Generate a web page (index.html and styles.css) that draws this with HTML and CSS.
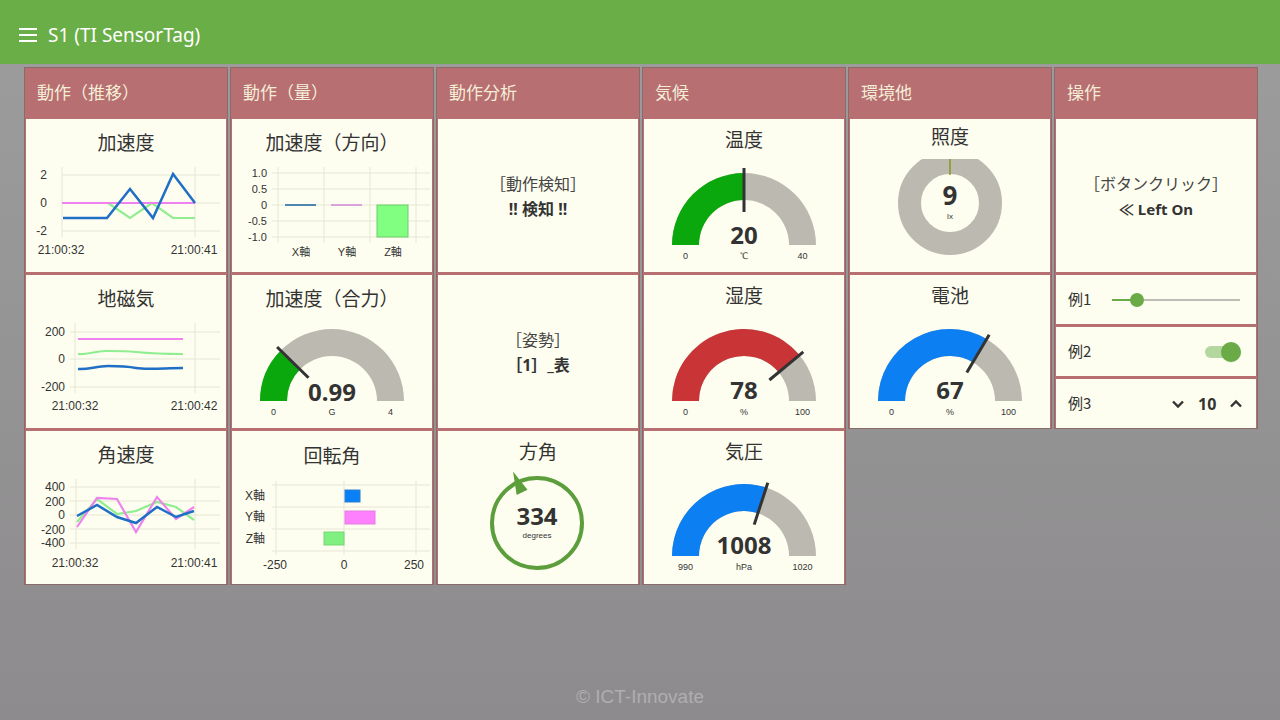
FILE: index.html
```html
<!DOCTYPE html>
<html lang="ja">
<head>
<meta charset="utf-8">
<title>S1 (TI SensorTag)</title>
<link rel="stylesheet" href="styles.css">
</head>
<body>
<header class="topbar">
  <svg class="menu" width="18" height="14" viewBox="0 0 18 14"><path d="M0 1H18M0 7H18M0 13H18" stroke="#fff" stroke-width="2"/></svg>
  <span class="app-title">S1 (TI SensorTag)</span>
</header>

<main class="board">
  <!-- Column 1 -->
  <section class="group">
    <h2 class="group-head">動作（推移）</h2>
    <div class="cards">
      <div class="card">
        <div class="title">加速度</div>
        <svg class="plot" viewBox="0 40 200 113" width="200" height="113">
          <path class="grid" d="M36 56H194M36 84H194M36 112H194M36 48V118M169 48V118"/>
          <g class="ax end"><text x="21" y="60">2</text><text x="21" y="88">0</text><text x="21" y="116">-2</text></g>
          <g class="ax mid"><text x="35" y="135">21:00:32</text><text x="168" y="135">21:00:41</text></g>
          <polyline class="ln lg" points="82,84 104,99 126,84 147,99 169,99"/>
          <polyline class="ln lm" points="36,84 169,84"/>
          <polyline class="ln lb" points="37,99 81,99 104,70 127,99 147,55 169,84"/>
        </svg>
      </div>
      <div class="card">
        <div class="title">地磁気</div>
        <svg class="plot" viewBox="0 40 200 113" width="200" height="113">
          <path class="grid" d="M44 57H194M44 84H194M44 112H194M49 48V118M169 48V118"/>
          <g class="ax end"><text x="39" y="61">200</text><text x="39" y="88">0</text><text x="39" y="116">-200</text></g>
          <g class="ax mid"><text x="49" y="135">21:00:32</text><text x="168" y="135">21:00:42</text></g>
          <polyline class="ln lm" points="52,64 157,64"/>
          <path class="ln lg" d="M52 79C62 80 68 76 80 76S100 76 110 77S130 79 157 79"/>
          <path class="ln lb" d="M52 94C62 95 70 91 82 91S100 91 110 93S140 93 157 93"/>
        </svg>
      </div>
      <div class="card">
        <div class="title">角速度</div>
        <svg class="plot" viewBox="0 40 200 113" width="200" height="113">
          <path class="grid" d="M44 56H194M44 70H194M44 84H194M44 98H194M44 112H194M50 48V118M169 48V118"/>
          <g class="ax end"><text x="39" y="60">400</text><text x="39" y="75">200</text><text x="39" y="88">0</text><text x="39" y="103">-200</text><text x="39" y="116">-400</text></g>
          <g class="ax mid"><text x="49" y="136">21:00:32</text><text x="168" y="136">21:00:41</text></g>
          <polyline class="ln lg" points="51,91 71,68 91,83 110,80 131,71 150,76 168,89"/>
          <polyline class="ln lm" points="51,96 71,67 91,68 110,101 131,66 150,88 168,76"/>
          <polyline class="ln lb" points="51,85 71,74 91,86 110,92 131,76 150,86 168,80"/>
        </svg>
      </div>
    </div>
  </section>

  <!-- Column 2 -->
  <section class="group">
    <h2 class="group-head">動作（量）</h2>
    <div class="cards">
      <div class="card">
        <div class="title">加速度（方向）</div>
        <svg class="plot" viewBox="0 40 200 113" width="200" height="113">
          <path class="grid" d="M40 54H198M40 70H198M40 86H198M40 102H198M40 118H198M46 48V124M92 48V124M138 48V124M184 48V124"/>
          <g class="ax end sm"><text x="35" y="58">1.0</text><text x="35" y="74">0.5</text><text x="35" y="90">0</text><text x="35" y="106">-0.5</text><text x="35" y="122">-1.0</text></g>
          <path d="M53 86H84" stroke="#4f86b0" stroke-width="2"/>
          <path d="M99 86H130" stroke="#dba3db" stroke-width="2"/>
          <rect x="145" y="86" width="31" height="32" fill="#80ff80" stroke="#6ccc6c"/>
          <g class="ax mid sm"><text x="69" y="137">X軸</text><text x="115" y="137">Y軸</text><text x="161" y="137">Z軸</text></g>
        </svg>
      </div>
      <div class="card">
        <div class="title">加速度（合力）</div>
        <svg class="plot" viewBox="0 40 200 113" width="200" height="113">
          <path class="g-bg" d="M28 126A72 72 0 0 1 172 126L145 126A45 45 0 0 0 55 126Z"/>
          <path fill="#0aa80c" d="M28 126A72 72 0 0 1 48.7 75.5L67.9 94.4A45 45 0 0 0 55 126Z"/>
          <path class="needle" d="M76.5 102.8L45.1 72"/>
          <text class="gval" x="100" y="126">0.99</text>
          <g class="glab"><text x="41.5" y="140">0</text><text x="100" y="140">G</text><text x="158.5" y="140">4</text></g>
        </svg>
      </div>
      <div class="card">
        <div class="title t-late">回転角</div>
        <svg class="plot" viewBox="0 40 200 113" width="200" height="113">
          <path class="grid" d="M40 54H198M40 76H198M40 98H198M40 120H198M44 50V124M112 50V124M184 50V124"/>
          <g class="ax end"><text x="33" y="69">X軸</text><text x="33" y="90">Y軸</text><text x="33" y="112">Z軸</text></g>
          <rect x="113" y="59" width="15" height="12" fill="#0a80f6" stroke="#2f7fd0"/>
          <rect x="113" y="80" width="30" height="13" fill="#ff80ff" stroke="#e07ee0"/>
          <rect x="92" y="101" width="20" height="13" fill="#80f080" stroke="#74d874"/>
          <g class="ax mid"><text x="43" y="138">-250</text><text x="112" y="138">0</text><text x="182" y="138">250</text></g>
        </svg>
      </div>
    </div>
  </section>

  <!-- Column 3 -->
  <section class="group">
    <h2 class="group-head">動作分析</h2>
    <div class="cards">
      <div class="card msg">
        <div class="lbl">［動作検知］</div>
        <div class="val big">!! 検知 !!</div>
      </div>
      <div class="card msg">
        <div class="lbl">［姿勢］</div>
        <div class="val big">［1］_表</div>
      </div>
      <div class="card">
        <div class="title t-gauge">方角</div>
        <svg class="plot" viewBox="0 40 200 113" width="200" height="113">
          <circle cx="99" cy="92" r="45" fill="none" stroke="#5c9e3c" stroke-width="4"/>
          <path d="M75 40.5L89.5 58.8L78.7 64Z" fill="#5c9e3c"/>
          <text class="gval" x="99" y="94">334</text>
          <text class="gunit" x="99" y="107">degrees</text>
        </svg>
      </div>
    </div>
  </section>

  <!-- Column 4 -->
  <section class="group">
    <h2 class="group-head">気候</h2>
    <div class="cards">
      <div class="card">
        <div class="title t-gauge">温度</div>
        <svg class="plot" viewBox="0 40 200 113" width="200" height="113">
          <path class="g-bg" d="M28 126A72 72 0 0 1 172 126L145 126A45 45 0 0 0 55 126Z"/>
          <path fill="#0aa80c" d="M28 126A72 72 0 0 1 100 54L100 81A45 45 0 0 0 55 126Z"/>
          <path class="needle" d="M100 93L100 49"/>
          <text class="gval" x="100" y="125">20</text>
          <g class="glab"><text x="41.5" y="140">0</text><text x="100" y="140">℃</text><text x="158.5" y="140">40</text></g>
        </svg>
      </div>
      <div class="card">
        <div class="title t-gauge">湿度</div>
        <svg class="plot" viewBox="0 40 200 113" width="200" height="113">
          <path class="g-bg" d="M28 126A72 72 0 0 1 172 126L145 126A45 45 0 0 0 55 126Z"/>
          <path fill="#c93536" d="M28 126A72 72 0 0 1 155.5 80.1L134.7 97.3A45 45 0 0 0 55 126Z"/>
          <path class="needle" d="M125.4 105L159.3 76.9"/>
          <text class="gval" x="100" y="124">78</text>
          <g class="glab"><text x="41.5" y="140">0</text><text x="100" y="140">%</text><text x="158.5" y="140">100</text></g>
        </svg>
      </div>
      <div class="card">
        <div class="title t-gauge">気圧</div>
        <svg class="plot" viewBox="0 40 200 113" width="200" height="113">
          <path class="g-bg" d="M28 125A72 72 0 0 1 172 125L145 125A45 45 0 0 0 55 125Z"/>
          <path fill="#0c7ff2" d="M28 125A72 72 0 0 1 122.2 56.5L113.9 82.2A45 45 0 0 0 55 125Z"/>
          <path class="needle" d="M110.2 93.6L123.8 51.8"/>
          <text class="gval" x="100" y="123">1008</text>
          <g class="glab"><text x="41.5" y="139">990</text><text x="100" y="139">hPa</text><text x="158.5" y="139">1020</text></g>
        </svg>
      </div>
    </div>
  </section>

  <!-- Column 5 -->
  <section class="group">
    <h2 class="group-head">環境他</h2>
    <div class="cards">
      <div class="card">
        <div class="title t-donut">照度</div>
        <svg class="plot" viewBox="0 40 200 113" width="200" height="113">
          <circle cx="100" cy="84" r="40.5" fill="none" stroke="#bbb9b0" stroke-width="23"/>
          <path d="M100 32.5V56" stroke="#8a9a1c" stroke-width="1.5"/>
          <text class="gval big" x="100" y="86">9</text>
          <text class="gunit" x="100" y="100">lx</text>
        </svg>
      </div>
      <div class="card">
        <div class="title t-gauge">電池</div>
        <svg class="plot" viewBox="0 40 200 113" width="200" height="113">
          <path class="g-bg" d="M28 126A72 72 0 0 1 172 126L145 126A45 45 0 0 0 55 126Z"/>
          <path fill="#0c7ff2" d="M28 126A72 72 0 0 1 136.6 64L122.9 87.3A45 45 0 0 0 55 126Z"/>
          <path class="needle" d="M116.8 97.6L139.2 59.7"/>
          <text class="gval" x="100" y="124">67</text>
          <g class="glab"><text x="41.5" y="140">0</text><text x="100" y="140">%</text><text x="158.5" y="140">100</text></g>
        </svg>
      </div>
    </div>
  </section>

  <!-- Column 6 -->
  <section class="group">
    <h2 class="group-head">操作</h2>
    <div class="cards">
      <div class="card msg">
        <div class="lbl">［ボタンクリック］</div>
        <div class="val">≪ Left On</div>
      </div>
      <div class="card row">
        <span class="row-label">例1</span>
        <svg class="slider" width="133" height="16" viewBox="0 0 133 16">
          <path d="M2 8H130" stroke="#bdbdb5" stroke-width="2"/>
          <path d="M2 8H27" stroke="#6aab48" stroke-width="2"/>
          <circle cx="27" cy="8" r="7" fill="#6aab48"/>
        </svg>
      </div>
      <div class="card row">
        <span class="row-label">例2</span>
        <svg class="toggle" width="41" height="24" viewBox="0 0 41 24">
          <rect x="3" y="6" width="35" height="12" rx="6" fill="#b4d79f"/>
          <circle cx="29" cy="12.5" r="10" fill="#5d9a3e" opacity="0.25"/>
          <circle cx="29" cy="12" r="10" fill="#6aab48"/>
        </svg>
      </div>
      <div class="card row">
        <span class="row-label">例3</span>
        <div class="stepper">
          <svg width="14" height="10" viewBox="0 0 14 10"><path d="M2 2.5L7 7.5L12 2.5" fill="none" stroke="#333" stroke-width="2.4"/></svg>
          <span class="step-val">10</span>
          <svg width="14" height="10" viewBox="0 0 14 10"><path d="M2 7.5L7 2.5L12 7.5" fill="none" stroke="#333" stroke-width="2.4"/></svg>
        </div>
      </div>
    </div>
  </section>
</main>

<footer class="footer">© ICT-Innovate</footer>
</body>
</html>
```

FILE: styles.css
```css
* { box-sizing: border-box; }

html, body {
  margin: 0;
  padding: 0;
}

body {
  width: 1280px;
  height: 720px;
  overflow: hidden;
  display: flex;
  flex-direction: column;
  background: linear-gradient(#9d9d9d, #8d8b8d);
  font-family: "Noto Sans", "Noto Sans CJK JP", sans-serif;
  color: #333;
}

.topbar {
  height: 64px;
  flex: none;
  display: flex;
  align-items: center;
  gap: 11px;
  padding: 6px 0 0 19px;
  background: #6aae47;
  color: #fff;
}

.menu { display: block; }

.app-title {
  font-size: 19px;
  letter-spacing: 0;
}

.board {
  flex: 1;
  display: flex;
  align-items: flex-start;
  gap: 2px;
  padding: 3px 0 0 24px;
}

.group {
  width: 204px;
  flex: none;
  border: 1px solid #8b6a6a;
  background: #b76f71;
  padding: 0 1px;
}

.group-head {
  margin: 0;
  height: 51px;
  display: flex;
  align-items: center;
  padding: 0 0 4px 11px;
  font-size: 17px;
  font-weight: normal;
  color: #f4eed8;
  font-family: "Noto Sans CJK JP", sans-serif;
}

.cards {
  display: flex;
  flex-direction: column;
  gap: 3px;
}

.card {
  width: 200px;
  height: 153px;
  background: #fefef0;
  display: flex;
  flex-direction: column;
  align-items: center;
}

.title {
  height: 40px;
  padding-top: 10px;
  font-size: 19px;
  line-height: 26px;
  font-family: "Noto Sans CJK JP", sans-serif;
  color: #333;
  white-space: nowrap;
}

.title.t-gauge { padding-top: 7px; }
.title.t-donut { padding-top: 4px; }
.title.t-late { padding-top: 11px; }

.plot { display: block; flex: none; }

.grid {
  fill: none;
  stroke: #e6e6d6;
  stroke-width: 1;
}

.ax text {
  font-family: "Liberation Sans", "Noto Sans CJK JP", sans-serif;
  font-size: 12px;
  fill: #333;
}
.ax.sm text { font-size: 11px; }
.ax.end text { text-anchor: end; }
.ax.mid text { text-anchor: middle; }

.ln {
  fill: none;
  stroke-width: 2.2;
  stroke-linejoin: miter;
}
.lb { stroke: #1f6fc6; stroke-width: 2.5; }
.lm { stroke: #ee82ee; }
.lg { stroke: #90ee90; }

.g-bg { fill: #bbb9b0; }

.needle {
  stroke: #333;
  stroke-width: 3;
  fill: none;
}

.gval {
  font-family: "Noto Sans", sans-serif;
  font-weight: bold;
  font-size: 24px;
  fill: #333;
  text-anchor: middle;
}
.gval.big { font-size: 26px; }

.gunit {
  font-family: "Liberation Sans", sans-serif;
  font-size: 8px;
  fill: #333;
  text-anchor: middle;
}

.glab text {
  font-family: "Liberation Sans", sans-serif;
  font-size: 9px;
  fill: #333;
  text-anchor: middle;
}

.card.msg {
  justify-content: center;
}

.msg .lbl {
  font-family: "Noto Sans CJK JP", sans-serif;
  font-size: 16px;
  line-height: 26px;
  color: #444;
}

.msg .val {
  font-family: "Noto Sans", "Noto Sans CJK JP", sans-serif;
  font-weight: bold;
  font-size: 15px;
  line-height: 26px;
  color: #333;
}
.msg .val.big { font-size: 16px; }

.card.row {
  height: 49px;
  flex-direction: row;
  align-items: center;
  padding: 0 13px 0 12px;
}

.row-label {
  font-family: "Noto Sans CJK JP", sans-serif;
  font-size: 15px;
  line-height: 20px;
  color: #333;
  padding-bottom: 2px;
}

.slider, .toggle {
  display: block;
  margin-left: auto;
}

.stepper {
  margin-left: auto;
  display: flex;
  align-items: center;
  gap: 13px;
}
.stepper svg { display: block; }

.step-val {
  font-weight: bold;
  font-size: 16px;
  width: 18px;
  text-align: center;
}

.footer {
  height: 46px;
  flex: none;
  line-height: 46px;
  text-align: center;
  font-family: "Liberation Sans", sans-serif;
  font-size: 19px;
  color: #b0aeb0;
}
```
